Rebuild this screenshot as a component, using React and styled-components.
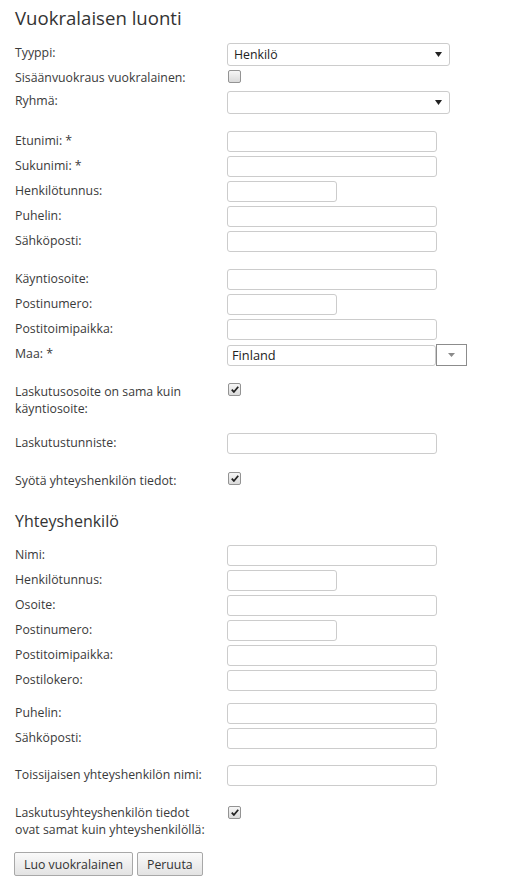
import React from 'react';
import styled, { createGlobalStyle } from 'styled-components';

const GlobalStyle = createGlobalStyle`
    body {
        margin: 0;
        background: #fff;
        font-family: "Open Sans", "Liberation Sans", sans-serif;
        font-size: 12.3px;
        color: #3a3a3a;
    }
`;

const Page = styled.div`
    padding: 0 0 20px 15px;
    width: 497px;
`;

const Title = styled.h1`
    margin: 6px 0 12px 0;
    font-size: 18.6px;
    line-height: 24px;
    font-weight: 400;
    color: #333;
`;

const SubTitle = styled.h2`
    margin: 15px 0 12px 0;
    font-size: 16px;
    line-height: 22px;
    font-weight: 400;
    color: #333;
`;

const Group = styled.div`
    margin-top: ${props => props.$gap || 0}px;
`;

const Row = styled.div`
    display: flex;
    align-items: flex-start;
    box-sizing: border-box;
    min-height: ${props => props.$h || 25}px;
    padding-top: 1px;
`;

const Label = styled.label`
    width: 212px;
    flex: none;
    line-height: ${props => (props.$two ? 17 : 18)}px;
    padding-top: 1px;
`;

const Input = styled.div`
    box-sizing: border-box;
    width: ${props => (props.$short ? 110 : 210)}px;
    height: 21px;
    border: 1px solid #ccc;
    border-radius: 3px;
    background: #fff;
`;

const Select = styled.div`
    box-sizing: border-box;
    width: 223px;
    height: 23px;
    display: flex;
    align-items: center;
    justify-content: space-between;
    padding: 0 7px 0 6px;
    border: 1px solid #ccc;
    border-radius: 3px;
    background: #fff;
    color: #222;
`;

const Combo = styled.div`
    display: flex;
    height: 21px;
`;

const ComboInput = styled.div`
    box-sizing: border-box;
    width: 209px;
    height: 21px;
    margin-top: 1px;
    padding-left: 4px;
    line-height: 19px;
    border: 1px solid #ccc;
    border-radius: 3px;
    color: #222;
    font-size: 12.8px;
`;

const ComboButton = styled.div`
    box-sizing: border-box;
    width: 31px;
    height: 22px;
    display: flex;
    align-items: center;
    justify-content: center;
    border: 1px solid #8c8c8c;
    background: #fff;
`;

const Check = styled.span`
    box-sizing: border-box;
    display: inline-flex;
    align-items: center;
    justify-content: center;
    width: 13px;
    height: 13px;
    margin: ${props => props.$top || 1}px 0 0 1px;
    border: 1px solid #939393;
    border-radius: 2px;
    background: linear-gradient(#f6f6f6, #dadada);
`;

const Buttons = styled.div`
    display: flex;
    gap: 4px;
    margin: 14px 0 0 -1px;
`;

const Button = styled.button`
    height: 24px;
    padding: 0 9px;
    font-family: inherit;
    font-size: 12.3px;
    color: #333;
    border: 1px solid #a8a8a8;
    border-radius: 2px;
    background: linear-gradient(#fafafa, #e3e3e3);
`;

const Arrow = ({ color = '#222', w = 7, h = 5 }) => (
    <svg width={w} height={h} viewBox="0 0 8 6" preserveAspectRatio="none">
        <path d="M0 0 H8 L4 6 Z" fill={color} />
    </svg>
);

const Tick = () => (
    <svg width="8" height="7" viewBox="0 0 9 8">
        <path d="M0.8 4.2 L3.2 6.8 L8.2 0.8" stroke="#222" strokeWidth="2" fill="none" />
    </svg>
);

function Field({ label, short }) {
    return (
        <Row>
            <Label>{label}</Label>
            <Input $short={short} />
        </Row>
    );
}

function App() {
    return (
        <Page>
            <GlobalStyle />
            <Title>Vuokralaisen luonti</Title>

            <Group>
                <Row>
                    <Label>Tyyppi:</Label>
                    <Select>Henkilö<Arrow /></Select>
                </Row>
                <Row $h={23}>
                    <Label>Sisäänvuokraus vuokralainen:</Label>
                    <Check $top={2} />
                </Row>
                <Row>
                    <Label>Ryhmä:</Label>
                    <Select><span /><Arrow /></Select>
                </Row>
            </Group>

            <Group $gap={15}>
                <Field label="Etunimi: *" />
                <Field label="Sukunimi: *" />
                <Field label="Henkilötunnus:" short />
                <Field label="Puhelin:" />
                <Field label="Sähköposti:" />
            </Group>

            <Group $gap={13}>
                <Field label="Käyntiosoite:" />
                <Field label="Postinumero:" short />
                <Field label="Postitoimipaikka:" />
                <Row>
                    <Label>Maa: *</Label>
                    <Combo>
                        <ComboInput>Finland</ComboInput>
                        <ComboButton><Arrow color="#8a8a8a" w={7} h={4} /></ComboButton>
                    </Combo>
                </Row>
            </Group>

            <Group $gap={13}>
                <Row>
                    <Label $two>Laskutusosoite on sama kuin<br />käyntiosoite:</Label>
                    <Check><Tick /></Check>
                </Row>
            </Group>

            <Group $gap={15}>
                <Field label="Laskutustunniste:" />
            </Group>

            <Group $gap={13}>
                <Row>
                    <Label>Syötä yhteyshenkilön tiedot:</Label>
                    <Check><Tick /></Check>
                </Row>
            </Group>

            <SubTitle>Yhteyshenkilö</SubTitle>

            <Group>
                <Field label="Nimi:" />
                <Field label="Henkilötunnus:" short />
                <Field label="Osoite:" />
                <Field label="Postinumero:" short />
                <Field label="Postitoimipaikka:" />
                <Field label="Postilokero:" />
            </Group>

            <Group $gap={8}>
                <Field label="Puhelin:" />
                <Field label="Sähköposti:" />
            </Group>

            <Group $gap={12}>
                <Field label="Toissijaisen yhteyshenkilön nimi:" />
            </Group>

            <Group $gap={13}>
                <Row>
                    <Label $two>Laskutusyhteyshenkilön tiedot<br />ovat samat kuin yhteyshenkilöllä:</Label>
                    <Check $top={3}><Tick /></Check>
                </Row>
            </Group>

            <Buttons>
                <Button>Luo vuokralainen</Button>
                <Button>Peruuta</Button>
            </Buttons>
        </Page>
    );
}

export default App;
